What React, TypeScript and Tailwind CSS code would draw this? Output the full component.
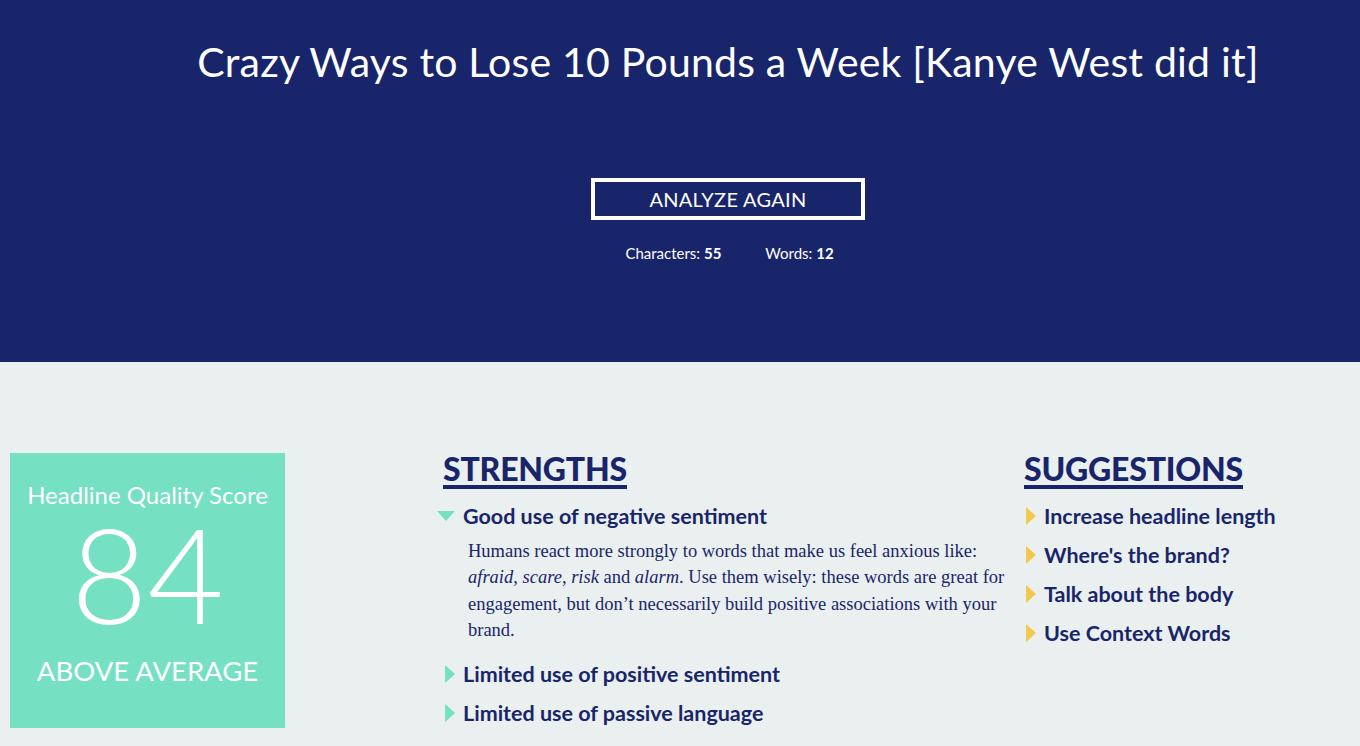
import React from 'react';

const strengths = [
  { title: 'Good use of negative sentiment', open: true },
  { title: 'Limited use of positive sentiment', open: false },
  { title: 'Limited use of passive language', open: false },
];

const suggestions = ['Increase headline length', "Where's the brand?", 'Talk about the body', 'Use Context Words'];

const Arrow = ({ open, color }: { open: boolean; color: string }) =>
  open ? (
    <svg width="18" height="10" viewBox="0 0 18 10" className="shrink-0">
      <polygon points="0,0 18,0 9,10" fill={color} />
    </svg>
  ) : (
    <svg width="10" height="18" viewBox="0 0 10 18" className="shrink-0">
      <polygon points="0,0 10,9 0,18" fill={color} />
    </svg>
  );

const App = () => {
  return (
    <div className="w-[1360px] h-[746px] overflow-hidden font-['Lato',sans-serif]">
      {/* Header */}
      <section className="h-[362px] bg-[#19256a] text-white pl-[96px] flex flex-col items-center">
        <h1 className="mt-[36px] text-[41px] leading-[52px] font-normal tracking-[0.2px]">
          Crazy Ways to Lose 10 Pounds a Week [Kanye West did it]
        </h1>
        <button className="mt-[90px] w-[274px] h-[42px] border-4 border-white text-[20px] tracking-[0.3px]">
          ANALYZE AGAIN
        </button>
        <div className="mt-[22px] flex gap-[44px] text-[15px] pl-[3px]">
          <span>
            Characters: <b className="font-bold">55</b>
          </span>
          <span>
            Words: <b className="font-bold">12</b>
          </span>
        </div>
      </section>

      {/* Results */}
      <section className="h-[384px] bg-[#eaf0f0] pt-[91px] pl-[10px] flex">
        <div className="w-[275px] h-[275px] bg-[#76e0c2] text-white flex flex-col items-center">
          <div className="mt-[27px] text-[24px] leading-[30px]">Headline Quality Score</div>
          <div className="text-[132px] leading-[126px] font-light">84</div>
          <div className="mt-[18px] text-[27.5px] leading-[34px]">ABOVE AVERAGE</div>
        </div>

        <div className="ml-[152px] w-[580px]">
          <h2 className="ml-[6px] inline-block text-[32px] leading-[32px] font-black text-[#19256a] border-b-4 border-[#19256a] tracking-[-0.2px]">
            STRENGTHS
          </h2>
          <div className="mt-[14px] flex flex-col">
            {strengths.map((s) => (
              <div key={s.title} className={s.open ? '' : 'mt-[13px]'}>
                <div className={`flex items-center ${s.open ? 'gap-[8px]' : 'gap-[8px] pl-[8px]'}`}>
                  <Arrow open={s.open} color="#76e0c2" />
                  <span className="text-[21.5px] leading-[26px] font-bold text-[#19256a]">{s.title}</span>
                </div>
                {s.open && (
                  <p className="mt-[9px] mb-[4px] ml-[31px] w-[560px] font-['Liberation_Serif',serif] text-[18.5px] leading-[26.4px] text-[#19256a]">
                    Humans react more strongly to words that make us feel anxious like:
                    <br />
                    <i>afraid</i>, <i>scare</i>, <i>risk</i> and <i>alarm</i>. Use them wisely: these words are great for
                    <br />
                    engagement, but don’t necessarily build positive associations with your
                    <br />
                    brand.
                  </p>
                )}
              </div>
            ))}
          </div>
        </div>

        <div className="ml-[7px]">
          <h2 className="inline-block text-[32px] leading-[32px] font-black text-[#19256a] border-b-4 border-[#19256a] tracking-[-0.2px]">
            SUGGESTIONS
          </h2>
          <div className="mt-[14px] flex flex-col gap-[13px]">
            {suggestions.map((s) => (
              <div key={s} className="flex items-center gap-[8px] pl-[2px]">
                <Arrow open={false} color="#f2c94c" />
                <span className="text-[21.5px] leading-[26px] font-bold text-[#19256a]">{s}</span>
              </div>
            ))}
          </div>
        </div>
      </section>
    </div>
  );
};

export default App;
